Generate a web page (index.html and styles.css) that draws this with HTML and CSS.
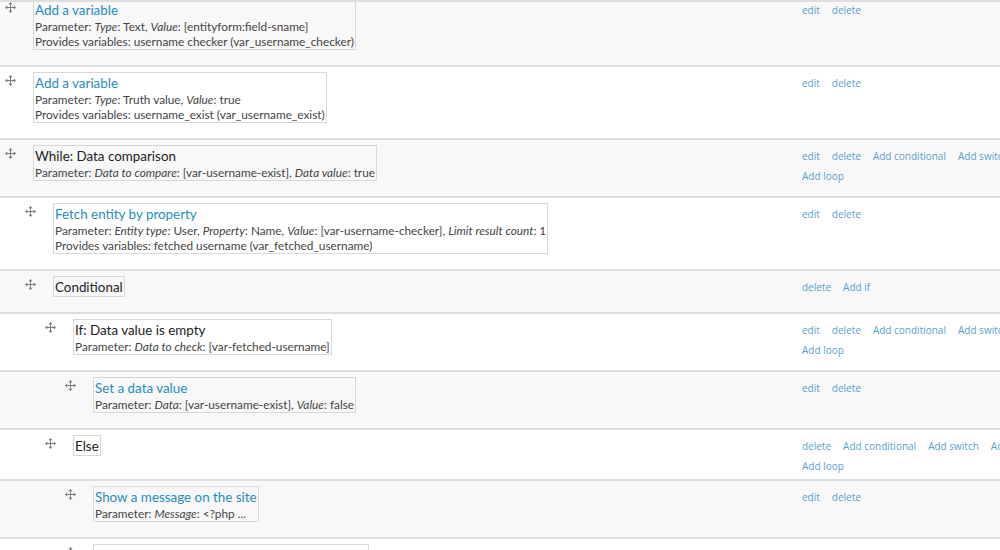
FILE: index.html
```html
<!DOCTYPE html>
<html lang="en">
<head>
    <meta charset="UTF-8">
    <title>Rule actions</title>
    <link rel="stylesheet" href="styles.css">
</head>
<body>
    <div class="top-edge"></div>

    <div class="rules">
        <!-- depth 0 -->
        <div class="rule-row">
            <div class="rule-main depth-0">
                <span class="handle"><svg viewBox="0 0 11 11"><path d="M5.5 1v9M1 5.5h9"/><path class="tip" d="M5.5 0l2 2.2h-4zM5.5 11l2-2.2h-4zM0 5.5l2.2-2v4zM11 5.5l-2.2-2v4z"/></svg></span>
                <div class="rule-box">
                    <a class="rule-title" href="#">Add a variable</a>
                    <div class="rule-param">Parameter: <em>Type</em>: Text, <em>Value</em>: [entityform:field-sname]</div>
                    <div class="rule-param">Provides variables: username checker (var_username_checker)</div>
                </div>
            </div>
            <div class="rule-ops">
                <div class="ops-line"><a href="#">edit</a><a href="#">delete</a></div>
            </div>
        </div>

        <div class="rule-row">
            <div class="rule-main depth-0">
                <span class="handle"><svg viewBox="0 0 11 11"><path d="M5.5 1v9M1 5.5h9"/><path class="tip" d="M5.5 0l2 2.2h-4zM5.5 11l2-2.2h-4zM0 5.5l2.2-2v4zM11 5.5l-2.2-2v4z"/></svg></span>
                <div class="rule-box">
                    <a class="rule-title" href="#">Add a variable</a>
                    <div class="rule-param">Parameter: <em>Type</em>: Truth value, <em>Value</em>: true</div>
                    <div class="rule-param">Provides variables: username_exist (var_username_exist)</div>
                </div>
            </div>
            <div class="rule-ops">
                <div class="ops-line"><a href="#">edit</a><a href="#">delete</a></div>
            </div>
        </div>

        <div class="rule-row">
            <div class="rule-main depth-0">
                <span class="handle"><svg viewBox="0 0 11 11"><path d="M5.5 1v9M1 5.5h9"/><path class="tip" d="M5.5 0l2 2.2h-4zM5.5 11l2-2.2h-4zM0 5.5l2.2-2v4zM11 5.5l-2.2-2v4z"/></svg></span>
                <div class="rule-box">
                    <span class="rule-title plain">While: Data comparison</span>
                    <div class="rule-param">Parameter: <em>Data to compare</em>: [var-username-exist], <em>Data value</em>: true</div>
                </div>
            </div>
            <div class="rule-ops">
                <div class="ops-line"><a href="#">edit</a><a href="#">delete</a><a href="#">Add conditional</a><a href="#">Add switch</a></div>
                <div class="ops-line"><a href="#">Add loop</a></div>
            </div>
        </div>

        <!-- inside the while loop -->
        <div class="rule-row">
            <div class="rule-main depth-1">
                <span class="handle"><svg viewBox="0 0 11 11"><path d="M5.5 1v9M1 5.5h9"/><path class="tip" d="M5.5 0l2 2.2h-4zM5.5 11l2-2.2h-4zM0 5.5l2.2-2v4zM11 5.5l-2.2-2v4z"/></svg></span>
                <div class="rule-box">
                    <a class="rule-title" href="#">Fetch entity by property</a>
                    <div class="rule-param">Parameter: <em>Entity type</em>: User, <em>Property</em>: Name, <em>Value</em>: [var-username-checker], <em>Limit result count</em>: 1</div>
                    <div class="rule-param">Provides variables: fetched username (var_fetched_username)</div>
                </div>
            </div>
            <div class="rule-ops">
                <div class="ops-line"><a href="#">edit</a><a href="#">delete</a></div>
            </div>
        </div>

        <div class="rule-row">
            <div class="rule-main depth-1">
                <span class="handle"><svg viewBox="0 0 11 11"><path d="M5.5 1v9M1 5.5h9"/><path class="tip" d="M5.5 0l2 2.2h-4zM5.5 11l2-2.2h-4zM0 5.5l2.2-2v4zM11 5.5l-2.2-2v4z"/></svg></span>
                <div class="rule-box">
                    <span class="rule-title plain">Conditional</span>
                </div>
            </div>
            <div class="rule-ops">
                <div class="ops-line"><a href="#">delete</a><a href="#">Add if</a></div>
            </div>
        </div>

        <div class="rule-row">
            <div class="rule-main depth-2">
                <span class="handle"><svg viewBox="0 0 11 11"><path d="M5.5 1v9M1 5.5h9"/><path class="tip" d="M5.5 0l2 2.2h-4zM5.5 11l2-2.2h-4zM0 5.5l2.2-2v4zM11 5.5l-2.2-2v4z"/></svg></span>
                <div class="rule-box">
                    <span class="rule-title plain">If: Data value is empty</span>
                    <div class="rule-param">Parameter: <em>Data to check</em>: [var-fetched-username]</div>
                </div>
            </div>
            <div class="rule-ops">
                <div class="ops-line"><a href="#">edit</a><a href="#">delete</a><a href="#">Add conditional</a><a href="#">Add switch</a></div>
                <div class="ops-line"><a href="#">Add loop</a></div>
            </div>
        </div>

        <div class="rule-row">
            <div class="rule-main depth-3">
                <span class="handle"><svg viewBox="0 0 11 11"><path d="M5.5 1v9M1 5.5h9"/><path class="tip" d="M5.5 0l2 2.2h-4zM5.5 11l2-2.2h-4zM0 5.5l2.2-2v4zM11 5.5l-2.2-2v4z"/></svg></span>
                <div class="rule-box">
                    <a class="rule-title" href="#">Set a data value</a>
                    <div class="rule-param">Parameter: <em>Data</em>: [var-username-exist], <em>Value</em>: false</div>
                </div>
            </div>
            <div class="rule-ops">
                <div class="ops-line"><a href="#">edit</a><a href="#">delete</a></div>
            </div>
        </div>

        <div class="rule-row">
            <div class="rule-main depth-2">
                <span class="handle"><svg viewBox="0 0 11 11"><path d="M5.5 1v9M1 5.5h9"/><path class="tip" d="M5.5 0l2 2.2h-4zM5.5 11l2-2.2h-4zM0 5.5l2.2-2v4zM11 5.5l-2.2-2v4z"/></svg></span>
                <div class="rule-box">
                    <span class="rule-title plain">Else</span>
                </div>
            </div>
            <div class="rule-ops">
                <div class="ops-line"><a href="#">delete</a><a href="#">Add conditional</a><a href="#">Add switch</a><a href="#">Add while</a></div>
                <div class="ops-line"><a href="#">Add loop</a></div>
            </div>
        </div>

        <div class="rule-row">
            <div class="rule-main depth-3">
                <span class="handle"><svg viewBox="0 0 11 11"><path d="M5.5 1v9M1 5.5h9"/><path class="tip" d="M5.5 0l2 2.2h-4zM5.5 11l2-2.2h-4zM0 5.5l2.2-2v4zM11 5.5l-2.2-2v4z"/></svg></span>
                <div class="rule-box">
                    <a class="rule-title" href="#">Show a message on the site</a>
                    <div class="rule-param">Parameter: <em>Message</em>: &lt;?php ...</div>
                </div>
            </div>
            <div class="rule-ops">
                <div class="ops-line"><a href="#">edit</a><a href="#">delete</a></div>
            </div>
        </div>

        <div class="rule-row">
            <div class="rule-main depth-3">
                <span class="handle"><svg viewBox="0 0 11 11"><path d="M5.5 1v9M1 5.5h9"/><path class="tip" d="M5.5 0l2 2.2h-4zM5.5 11l2-2.2h-4zM0 5.5l2.2-2v4zM11 5.5l-2.2-2v4z"/></svg></span>
                <div class="rule-box">
                    <a class="rule-title" href="#">Set a data value</a>
                    <div class="rule-param">Parameter: <em>Data</em>: [var-username-checker], <em>Value</em>: true</div>
                </div>
            </div>
            <div class="rule-ops">
                <div class="ops-line"><a href="#">edit</a><a href="#">delete</a></div>
            </div>
        </div>
    </div>
</body>
</html>
```

FILE: styles.css
```css
:root {
    --row-alt: #f8f8f8;
    --line: #dedede;
    --box-line: #d8d8d8;
    --link: #1f8dc2;
    --ops-link: #5a9fcb;
    --text: #444;
    --title: #222;
}

* {
    margin: 0;
    padding: 0;
    box-sizing: border-box;
}

html, body {
    overflow: hidden;
}

body {
    background: #fff;
    font-family: Lato, "Open Sans", sans-serif;
    color: var(--text);
}

/* bottom edge of the sticky table header */
.top-edge {
    position: fixed;
    top: 0;
    left: 0;
    right: 0;
    height: 2px;
    background: var(--line);
}

.rules {
    margin-top: -6px;
}

.rule-row {
    display: flex;
    align-items: flex-start;
    border-bottom: 2px solid var(--line);
}

.rule-row:nth-child(odd) {
    background: var(--row-alt);
}

.rule-main {
    display: flex;
    align-items: flex-start;
    flex: 0 0 802px;
    padding: 5px 0 15px 5px;
}

.depth-1 { padding-left: 25px; }
.depth-2 { padding-left: 45px; }
.depth-3 { padding-left: 65px; }

.handle {
    flex: 0 0 28px;
    padding-top: 3px;
}

.handle svg {
    display: block;
    width: 11px;
    height: 11px;
}

.handle path {
    stroke: #7a7a7a;
    stroke-width: 1;
    fill: none;
}

.handle path.tip {
    stroke: none;
    fill: #7a7a7a;
}

.rule-box {
    border: 1px solid var(--box-line);
    padding: 0 1px;
}

.rule-title {
    display: block;
    padding-top: 1px;
    font-size: 13.4px;
    line-height: 18px;
    color: var(--link);
    text-decoration: none;
    white-space: nowrap;
}

.rule-title.plain {
    color: var(--title);
}

.rule-param {
    font-size: 11.8px;
    line-height: 15px;
    white-space: nowrap;
}

.rule-ops {
    flex: 1;
    padding: 6px 0 3px;
    font-family: "Open Sans", sans-serif;
    font-size: 10px;
    line-height: 20px;
    white-space: nowrap;
}

.rule-ops a {
    color: var(--ops-link);
    text-decoration: none;
    margin-right: 12px;
}
```
